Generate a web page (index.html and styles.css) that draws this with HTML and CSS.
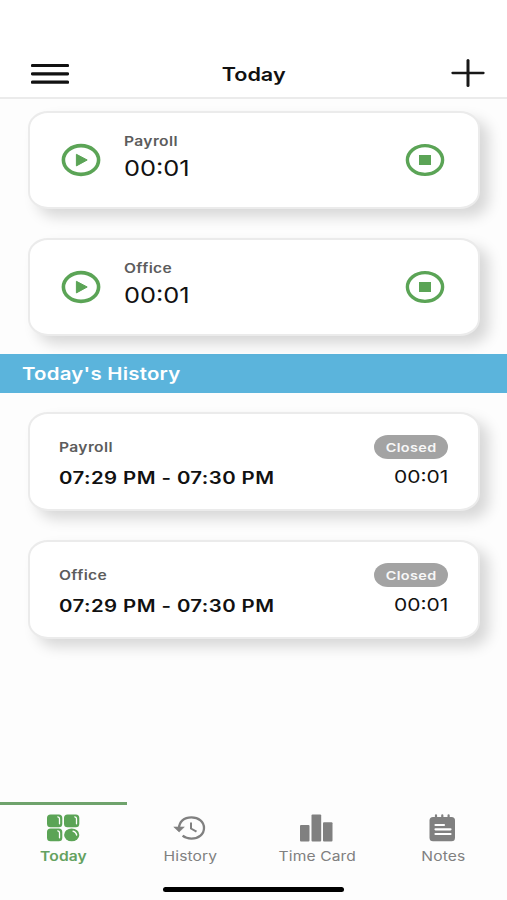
FILE: index.html
```html
<!DOCTYPE html>
<html lang="en">
<head>
<meta charset="utf-8">
<title>Today</title>
<link rel="stylesheet" href="styles.css">
</head>
<body>
<svg class="sprite" aria-hidden="true">
  <symbol id="play" viewBox="0 0 40 34">
    <ellipse cx="20" cy="17" rx="17.6" ry="14.4" fill="none" stroke="#5ba456" stroke-width="3.6"/>
    <path d="M15.400 11.300 26.200 17l-10.800 5.900z" fill="#5ba456" stroke="#5ba456" stroke-width="1" stroke-linejoin="round"/>
  </symbol>
  <symbol id="stop" viewBox="0 0 40 34">
    <ellipse cx="20" cy="17" rx="17.600" ry="14.400" fill="none" stroke="#5ba456" stroke-width="3.400"/>
    <rect x="14" y="12" width="12" height="10" fill="#5ba456"/>
  </symbol>
</svg>
<header class="topbar">
  <svg class="menu" viewBox="0 0 38 22"><path d="M1.500 2.500h35M1.500 10.800h35M1.500 19.200h35" stroke="#111" stroke-width="3.200" stroke-linecap="round"/></svg>
  <h1><span class="t title">Today</span></h1>
  <svg class="plus" viewBox="0 0 34 28"><path d="M1.500 14h31" stroke="#181818" stroke-width="2.300" stroke-linecap="round"/><path d="M17 1.500v25" stroke="#181818" stroke-width="3" stroke-linecap="round"/></svg>
</header>
<main>
  <section class="timers">
    <article class="card timer">
      <svg class="round"><use href="#play"/></svg>
      <div class="info"><span class="t name">Payroll</span><span class="t clock">00:01</span></div>
      <svg class="round"><use href="#stop"/></svg>
    </article>
    <article class="card timer">
      <svg class="round"><use href="#play"/></svg>
      <div class="info"><span class="t name">Office</span><span class="t clock">00:01</span></div>
      <svg class="round"><use href="#stop"/></svg>
    </article>
  </section>
  <h2 class="band"><span class="t heading">Today's History</span></h2>
  <section class="history">
    <article class="card entry">
      <div class="info"><span class="t name">Payroll</span><span class="t range">07:29 PM - 07:30 PM</span></div>
      <div class="side"><span class="badge"><span class="t closed">Closed</span></span><span class="t total">00:01</span></div>
    </article>
    <article class="card entry">
      <div class="info"><span class="t name">Office</span><span class="t range">07:29 PM - 07:30 PM</span></div>
      <div class="side"><span class="badge"><span class="t closed">Closed</span></span><span class="t total">00:01</span></div>
    </article>
  </section>
</main>
<nav class="tabs">
  <a class="tab active">
    <svg viewBox="0 0 34 28">
      <g fill="#5ba456"><rect x="1" y=".5" width="15.300" height="12.800" rx="3.500"/><rect x="18" y=".5" width="15.300" height="12.800" rx="3.500"/><rect x="1" y="14.500" width="15.300" height="12.800" rx="3.500"/><ellipse cx="25.700" cy="20.900" rx="7.600" ry="6.400"/></g>
      <g fill="none" stroke="#fff" stroke-width="1.300" stroke-linecap="round"><path d="M11.800 2.800q1.700.2 1.700 2v5M28.800 2.800q1.700.2 1.700 2v5M11.800 16.800q1.700.2 1.700 2v5M27 17.200q3 .8 3.700 3.800"/></g>
    </svg>
    <span class="t label">Today</span>
  </a>
  <a class="tab">
    <svg viewBox="0 0 34 28"><g fill="none" stroke="#808080" stroke-width="2.300"><path d="M6 14.500C6 7.800 11 3.400 18.400 3.400s12.600 4.400 12.600 10.600S25.800 24.600 18.400 24.600c-3.500 0-6.500-1-8.800-2.900"/><path d="M18 8.500v6l5.500 3.200" stroke-width="2"/></g><path d="M.8 13h10.500l-5.200 5z" fill="#808080" stroke="#808080" stroke-width=".6"/></svg>
    <span class="t label">History</span>
  </a>
  <a class="tab">
    <svg viewBox="0 0 34 28"><g fill="#808080"><rect x="0" y="11" width="9.500" height="16.500" rx="1"/><rect x="11.500" y=".5" width="9.700" height="27" rx="1"/><rect x="23" y="8.200" width="9.500" height="19.300" rx="1"/></g></svg>
    <span class="t label">Time Card</span>
  </a>
  <a class="tab">
    <svg viewBox="0 0 34 28"><path d="M9 1.300v4M15.300 1.300v4M21.600 1.300v4" stroke="#808080" stroke-width="2.200" stroke-linecap="round"/><rect x="2.500" y="3" width="25.500" height="24.300" rx="3.500" fill="#808080"/><path d="M8.500 11h8.500M8.500 15.300h15M8.500 20h15" stroke="#fff" stroke-width="2.200" stroke-linecap="round"/></svg>
    <span class="t label">Notes</span>
  </a>
</nav>
<footer class="home"><i></i></footer>
</body>
</html>
```
FILE: styles.css
```css
* { box-sizing: border-box; }
body {
  margin: 0;
  height: 900px;
  display: flex;
  flex-direction: column;
  background: #fdfdfd;
  color: #111;
  font-family: Inter, "Liberation Sans", sans-serif;
  overflow: hidden;
}
h1, h2 { margin: 0; font-size: inherit; font-weight: inherit; }
svg { display: block; flex: none; }
.sprite { width: 0; height: 0; position: absolute; }
.t { display: inline-block; white-space: nowrap; transform: scaleX(1.2); transform-origin: left center; }

.topbar {
  height: 99px;
  padding: 49px 22px 0 31px;
  display: grid;
  grid-template-columns: 38px 1fr 34px;
  align-items: center;
  border-bottom: 2px solid #ebebeb;
  background: #fff;
}
.menu { width: 38px; height: 22px; margin-top: 1px; }
.plus { width: 34px; height: 28px; }
.topbar h1 { text-align: center; line-height: 24px; padding: 3px 12px 0 0; }
.title { font-size: 18px; font-weight: 600; transform-origin: center; }

.timers, .history { padding: 0 27px 0 28px; display: flex; flex-direction: column; }
.timers { padding-top: 12px; gap: 29px; height: 255px; }
.history { padding-top: 19px; gap: 30px; }
.card {
  display: flex;
  height: 98px;
  border: 2px solid #ebebeb;
  border-radius: 20px / 17px;
  background: #fff;
  box-shadow: 9px 8px 14px rgba(0, 0, 0, .15);
}
.timer { align-items: center; padding: 0 33px 0 31px; }
.round { width: 40px; height: 34px; }
.info { display: flex; flex-direction: column; align-items: flex-start; flex: 1; }
.timer .info { padding: 0 0 4px 23px; }
.name { font-size: 13px; line-height: 20px; font-weight: 600; letter-spacing: .3px; color: #5c5c5c; }
.clock { font-size: 21.500px; line-height: 34px; transform: scaleX(1.18); }

.band { height: 39px; padding-left: 22px; display: flex; align-items: center; background: #5bb4dc; color: #fff; }
.heading { font-size: 17px; font-weight: 600; letter-spacing: .2px; }

.entry { height: 99px; padding: 21px 30px 0 29px; }
.entry + .entry { margin-top: -1px; }
.entry .name { line-height: 25px; }
.range { font-size: 17px; font-weight: 600; line-height: 36px; letter-spacing: .35px; }
.side { display: flex; flex-direction: column; align-items: flex-end; }
.badge { width: 74px; height: 24px; border-radius: 14px / 12px; background: #a3a3a3; color: #f7f7f7; display: flex; align-items: center; justify-content: center; }
.closed { font-size: 12px; font-weight: 600; letter-spacing: .3px; transform-origin: center; }
.total { font-size: 17.500px; line-height: 36px; transform-origin: right center; }

.tabs { margin-top: auto; height: 76px; display: grid; grid-template-columns: repeat(4, 1fr); }
.tab { display: flex; flex-direction: column; align-items: center; padding-top: 9px; border-top: 3px solid transparent; color: #808080; }
.tab.active { border-color: #6fa36c; color: #64a160; }
.tab svg { width: 34px; height: 28px; }
.label { font-size: 13px; line-height: 28px; letter-spacing: .1px; transform-origin: center; }
.active .label { font-weight: 600; }
.home { height: 22px; display: flex; justify-content: center; padding-top: 9px; }
.home i { width: 181px; height: 5px; border-radius: 3px; background: #000; }
```
